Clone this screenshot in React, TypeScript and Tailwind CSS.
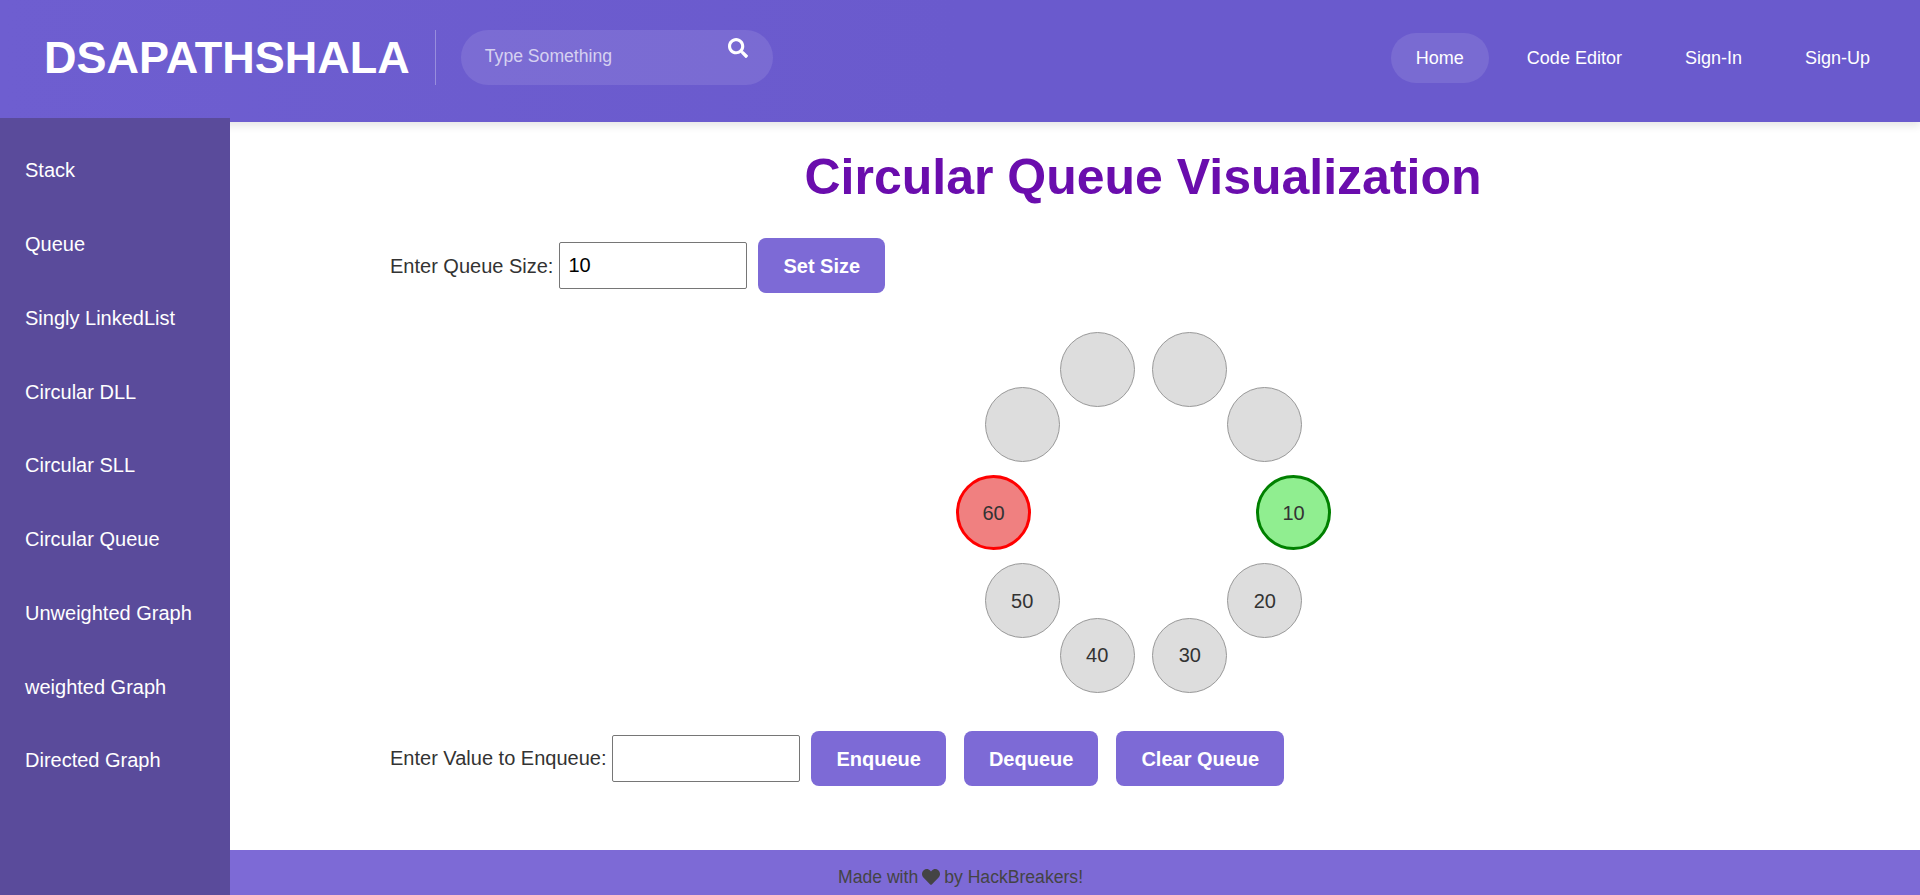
import React from 'react';
import { FaHeart, FaSearch } from 'react-icons/fa';

const sideLinks = [
  'Stack',
  'Queue',
  'Singly LinkedList',
  'Circular DLL',
  'Circular SLL',
  'Circular Queue',
  'Unweighted Graph',
  'weighted Graph',
  'Directed Graph',
];

// slots run clockwise from the front of the queue, 36deg apart
const slots = [10, 20, 30, 40, 50, 60, null, null, null, null];

function QueueRing() {
  return (
    <div className="relative mx-auto h-[404px] w-[376px]">
      {slots.map((value, i) => {
        const angle = (i * 36 * Math.PI) / 180;
        const left = 188.5 + 150 * Math.cos(angle) - 37.5;
        const top = 183.5 + 150 * Math.sin(angle) - 37.5;
        let tone = 'border border-[#999] bg-[#ddd]';
        if (i === 0) tone = 'border-[3px] border-[#008000] bg-[#90ee90]';
        if (i === 5) tone = 'border-[3px] border-[#ff0000] bg-[#f08080]';

        return (
          <div
            key={i}
            className={`absolute flex h-[75px] w-[75px] items-center justify-center rounded-full text-[20px] text-[#333] ${tone}`}
            style={{ left, top }}
          >
            {value}
          </div>
        );
      })}
    </div>
  );
}

export default function App() {
  return (
    <div className="flex h-[895px] flex-col overflow-hidden bg-white font-['Liberation_Sans',Arial,sans-serif]">
      {/* Header */}
      <header className="relative z-10 flex h-[122px] shrink-0 items-start justify-between bg-gradient-to-r from-[#6e5ed0] via-[#6a5acd] to-[#6a5acd] pl-[44px] pr-[25px] shadow-[0_4px_8px_rgba(0,0,0,0.1)]">
        <div className="flex items-center pt-[30px]">
          <h2 className="pr-[25px] text-[45px] font-bold leading-[55px] text-white">DSAPATHSHALA</h2>
          <div className="h-[55px] w-px bg-white/30" />
          <div className="ml-[25px] flex h-[55px] w-[312px] items-start justify-between rounded-full bg-white/10 pl-[24px] pr-[25px]">
            <span className="pt-[16px] text-[17.6px] leading-[20px] text-white/70">Type Something</span>
            <FaSearch className="mt-[8px] text-[20px] text-white" />
          </div>
        </div>
        <nav className="flex items-center gap-[13px] pt-[33px] text-[18px] text-white">
          <a className="flex h-[50px] items-center rounded-full bg-white/10 px-[25px]">Home</a>
          <a className="flex h-[50px] items-center rounded-full px-[25px]">Code Editor</a>
          <a className="flex h-[50px] items-center rounded-full px-[25px]">Sign-In</a>
          <a className="flex h-[50px] items-center rounded-full px-[25px]">Sign-Up</a>
        </nav>
      </header>

      <div className="flex min-h-0 flex-1">
        {/* Sidebar */}
        <aside className="relative z-20 -mt-[4px] w-[230px] shrink-0 bg-[#5a4b9b] pt-[15.5px]">
          {sideLinks.map((link) => (
            <a key={link} className="flex h-[73.75px] items-center pl-[25px] text-[20px] text-white">
              {link}
            </a>
          ))}
        </aside>

        {/* Main content */}
        <main className="flex min-w-0 flex-1 flex-col">
          <div className="flex-1 pl-[136px] text-[20px] text-[#333]">
            <h1 className="pt-[24px] text-center text-[50px] font-bold leading-[62px] text-[#6a0dad]">
              Circular Queue Visualization
            </h1>
            <div className="mt-[30px] flex items-center pl-[24px]">
              <label>Enter Queue Size:</label>
              <input
                readOnly
                value="10"
                className="ml-[6px] h-[47px] w-[188px] rounded-[2px] border border-[#767676] px-2 text-[20px] text-black"
              />
              <button className="ml-[11px] h-[55px] rounded-lg bg-[#7d6ad6] px-[25px] font-bold text-white">Set Size</button>
            </div>
            <div className="mt-[36px]">
              <QueueRing />
            </div>
            <div className="mt-[-2px] flex items-center pl-[24px]">
              <label className="-mt-[2px]">Enter Value to Enqueue:</label>
              <input readOnly className="ml-[6px] h-[47px] w-[188px] rounded-[2px] border border-[#767676] px-2" />
              <button className="ml-[11px] h-[55px] rounded-lg bg-[#7d6ad6] px-[25px] font-bold text-white">Enqueue</button>
              <button className="ml-[18px] h-[55px] rounded-lg bg-[#7d6ad6] px-[25px] font-bold text-white">Dequeue</button>
              <button className="ml-[18px] h-[55px] rounded-lg bg-[#7d6ad6] px-[25px] font-bold text-white">Clear Queue</button>
            </div>
          </div>

          <footer className="h-[45px] shrink-0 bg-[#7d6ad6] pl-[608px] pt-[17px] text-[17.6px] leading-[20px] text-[#444]">
            <span className="inline-flex items-center gap-[4px]">
              Made with <FaHeart className="text-[18px]" /> by HackBreakers!
            </span>
          </footer>
        </main>
      </div>
    </div>
  );
}
